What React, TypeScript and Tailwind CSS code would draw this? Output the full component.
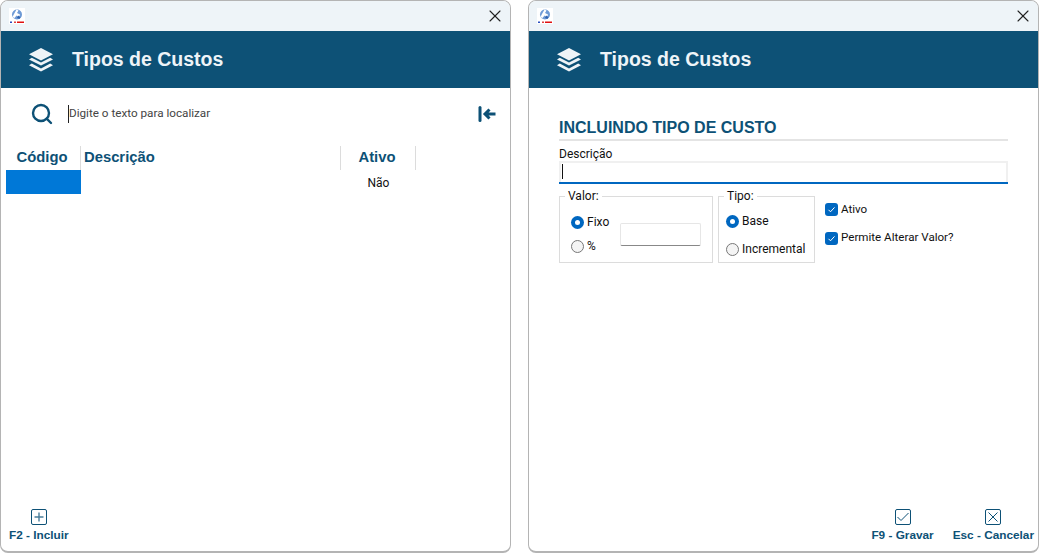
import { useState } from "react";
import { Search, X } from "lucide-react";

const body = "font-['Roboto','Liberation_Sans',sans-serif]";
const head = "font-['Liberation_Sans',Arial,sans-serif]";

function Logo() {
  return (
    <svg width="16" height="16" viewBox="0 0 16 16" className="bg-white">
      <circle cx="8" cy="6.500" r="5" fill="#6f9bd6" />
      <path d="M7.500 1.500l2 1-1.500 2.500 3 1.500-1 3-2.500-2-2 2.500-2-1 1.500-3z" fill="#ffffff" />
      <path d="M9 7.500l2.500 1.500-1 2-2.500-1z" fill="#2f62b0" />
      <rect x="1" y="13.500" width="2" height="1.500" fill="#2a4fc0" />
      <rect x="5" y="13.500" width="2" height="1.500" fill="#e04040" />
      <rect x="8" y="13.500" width="7" height="1.500" fill="#e01010" />
    </svg>
  );
}

function LayersIcon() {
  return (
    <svg width="26" height="26" viewBox="0 0 26 26" fill="#eef4f8">
      <path d="M13 1l12 6.200-12 6.200-12-6.200z" />
      <path d="M3.800 10.800l9.200 4.800 9.200-4.800 2.800 1.600-12 6.200-12-6.200z" />
      <path d="M3.800 16.600l9.200 4.800 9.200-4.800 2.800 1.600-12 6.200-12-6.200z" />
    </svg>
  );
}

function Window({ children }: { children: React.ReactNode }) {
  return (
    <section className="flex h-[553px] w-[511px] flex-col overflow-hidden rounded-lg border border-[#b4b4b4] border-b-2 bg-white">
      <div className="flex h-[30px] shrink-0 items-center justify-between bg-[#eef4f8] pl-2 pr-[5px]">
        <Logo />
        <X className="size-[20px] text-[#222]" strokeWidth={1.3} />
      </div>
      <header className="flex h-[57px] shrink-0 items-center gap-[18px] bg-[#0d5176] pl-[27px]">
        <LayersIcon />
        <h1 className={`${head} text-[19.5px] font-bold text-[#eef4f8]`}>Tipos de Custos</h1>
      </header>
      {children}
    </section>
  );
}

function FooterAction({ label, icon }: { label: string; icon: React.ReactNode }) {
  return (
    <div className="flex flex-col items-center gap-[3px]">
      <span className="flex size-4 items-center justify-center rounded-[2px] border border-[#0d5176] text-[#0d5176]">
        {icon}
      </span>
      <span className={`${head} text-[11.8px] leading-[14px] font-bold text-[#0d5176]`}>{label}</span>
    </div>
  );
}

function Radio({ checked, label }: { checked?: boolean; label: string }) {
  return (
    <label className={`${body} flex items-center gap-[3px] text-[12px] text-[#111]`}>
      {checked ? (
        <span className="flex size-[13px] items-center justify-center rounded-full bg-[#0067c0]">
          <span className="size-[5px] rounded-full bg-white" />
        </span>
      ) : (
        <span className="size-[13px] rounded-full border border-[#777] bg-[#f4f4f4]" />
      )}
      {label}
    </label>
  );
}

function Check({ label }: { label: string }) {
  return (
    <label className={`${body} flex items-center gap-[3px] text-[11.6px] text-[#111]`}>
      <span className="flex size-[13px] items-center justify-center rounded-[3px] bg-[#0067c0]">
        <svg width="9" height="9" viewBox="0 0 9 9" fill="none" stroke="#fff" strokeWidth="1">
          <path d="M1.500 4.800l2 2 4-4.400" />
        </svg>
      </span>
      {label}
    </label>
  );
}

function ListWindow() {
  const [query, setQuery] = useState("");
  return (
    <Window>
      <div className="flex h-[58px] shrink-0 items-center pb-[6px] pl-[29px] pr-[14px]">
        <Search className="size-[24px] text-[#0d5176]" strokeWidth={2.4} />
        <input
          value={query}
          onChange={(e) => setQuery(e.target.value)}
          placeholder="Digite o texto para localizar"
          className={`${body} ml-[14px] flex-1 border-l border-[#222] pl-0 text-[11.7px] text-[#333] outline-none placeholder:text-[#444]`}
        />
        <svg width="18" height="16" viewBox="0 0 18 16" fill="none" stroke="#0d5176" strokeWidth="3">
          <path d="M2 1.500v13" strokeLinecap="round" />
          <path d="M17.500 8H7M11.500 3.500L7 8l4.500 4.500" strokeWidth="3" />
        </svg>
      </div>
      <div className="ml-[5px]">
        <div className={`${head} flex h-6 text-[14.8px] font-bold text-[#0d5176]`}>
          <div className="flex w-[75px] items-center justify-center border-r border-[#dcdcdc] pr-[2px] pb-[2px]">Código</div>
          <div className="flex w-[260px] items-center border-r border-[#dcdcdc] pb-[2px] pl-[3px]">Descrição</div>
          <div className="flex w-[75px] items-center justify-center border-r border-[#dcdcdc] pr-[2px] pb-[2px]">Ativo</div>
        </div>
        <div className={`${body} flex h-6 items-center text-[12px] text-[#111]`}>
          <div className="h-6 w-[75px] bg-[#0078d7]" />
          <div className="w-[260px]" />
          <div className="w-[75px] pt-[1px] text-center">Não</div>
        </div>
      </div>
      <footer className="mt-auto pb-[9px] pl-[8px]">
        <div className="inline-block">
          <FooterAction
            label="F2 - Incluir"
            icon={
              <svg width="10" height="10" viewBox="0 0 10 10" stroke="#4a7f9c" strokeWidth="1.400">
                <path d="M5 0.500v9M0.500 5h9" />
              </svg>
            }
          />
        </div>
      </footer>
    </Window>
  );
}

function FormWindow() {
  return (
    <Window>
      <div className="flex flex-1 flex-col px-[30px] pt-[31px]">
        <h2 className={`${head} border-b-2 border-[#e4e4e4] pb-[2px] text-[16px] leading-[18px] font-bold text-[#0d5176]`}>
          INCLUINDO TIPO DE CUSTO
        </h2>
        <label className={`${body} mt-[6px] block text-[12px] leading-[14px] text-[#111]`}>Descrição</label>
        <div className="h-[21px] border-2 border-b-0 border-[#f0f0f0] pl-[1px] pt-[1px]">
          <div className="h-[15px] w-px bg-[#111]" />
        </div>
        <div className="h-[2px] bg-[#0067c0]" />
        <div className="mt-[6px] flex items-start gap-[5px]">
          <fieldset className="h-[73px] w-[154px] border border-[#dcdcdc] pl-[11px]">
            <legend className={`${body} ml-[-6px] px-[3px] text-[12px] leading-[13px] text-[#111]`}>Valor:</legend>
            <div className="flex items-start">
              <div className="flex w-[49px] shrink-0 flex-col gap-[6px] pt-[10px]">
                <Radio checked label="Fixo" />
                <Radio label="%" />
              </div>
              <div className="mt-[20px] h-[23px] w-[81px] rounded-[2px] border border-[#e6e6e6] border-b-[#888]" />
            </div>
          </fieldset>
          <fieldset className="h-[73px] w-[97px] border border-[#dcdcdc] pl-[7px]">
            <legend className={`${body} ml-[-2px] px-[3px] text-[12px] leading-[13px] text-[#111]`}>Tipo:</legend>
            <div className="flex flex-col gap-[10px] pt-[9px]">
              <Radio checked label="Base" />
              <Radio label="Incremental" />
            </div>
          </fieldset>
          <div className="mt-[7px] flex flex-col gap-[11px] pl-[5px] pt-[4px]">
            <Check label="Ativo" />
            <Check label="Permite Alterar Valor?" />
          </div>
        </div>
      </div>
      <footer className="flex justify-end gap-[19px] pb-[9px] pr-[4px]">
        <FooterAction
          label="F9 - Gravar"
          icon={
            <svg width="12" height="10" viewBox="0 0 12 10" fill="none" stroke="#0d5176" strokeWidth="1">
              <path d="M0.500 5l3.500 3.500L11.500 1" />
            </svg>
          }
        />
        <FooterAction
          label="Esc - Cancelar"
          icon={
            <svg width="10" height="10" viewBox="0 0 10 10" fill="none" stroke="#0d5176" strokeWidth="1">
              <path d="M0.500 0.500l9 9M9.500 0.500l-9 9" />
            </svg>
          }
        />
      </footer>
    </Window>
  );
}

export default function App() {
  return (
    <main className="flex h-[553px] w-[1040px] gap-[17px] overflow-hidden bg-white">
      <ListWindow />
      <FormWindow />
    </main>
  );
}
